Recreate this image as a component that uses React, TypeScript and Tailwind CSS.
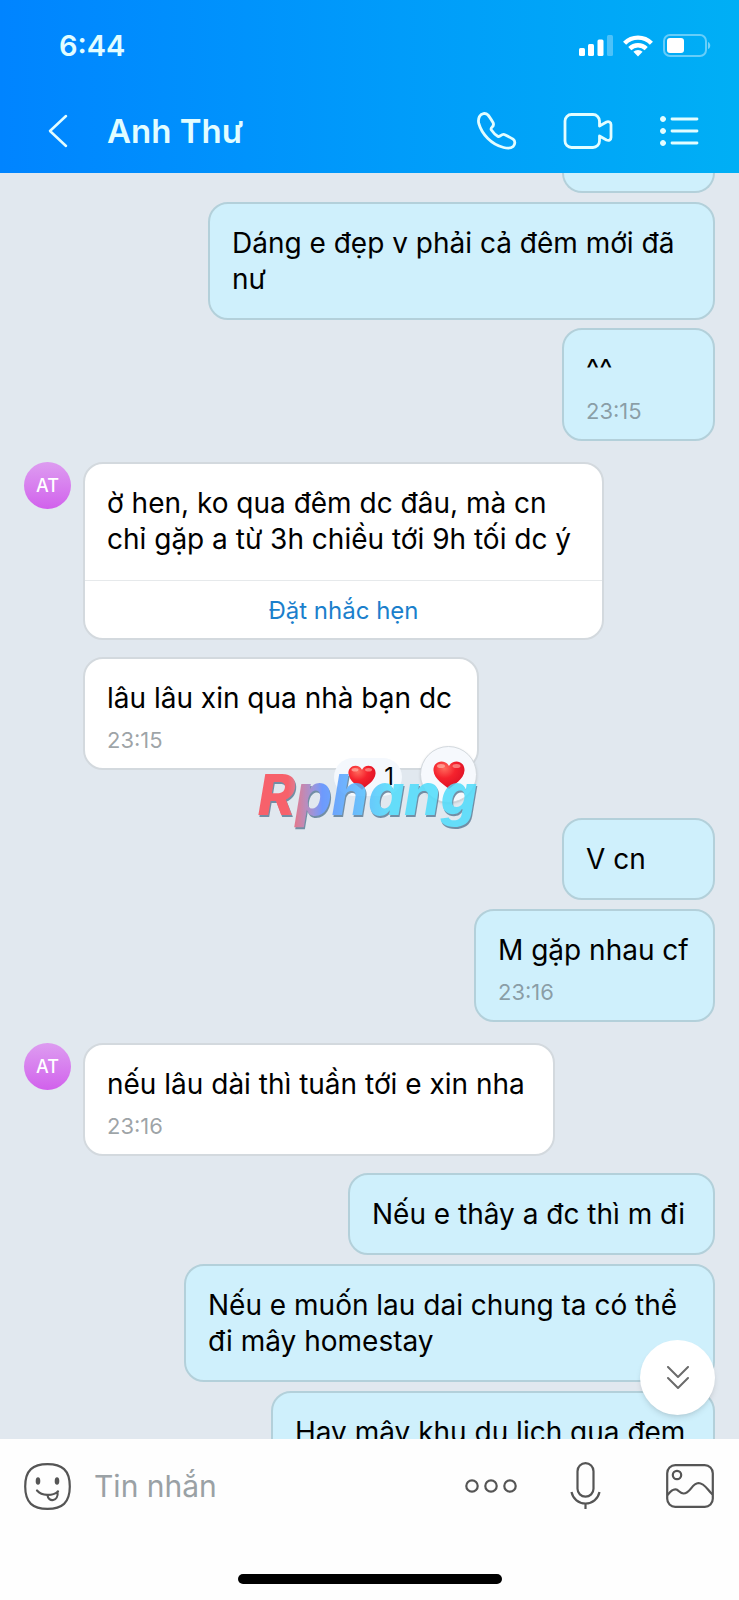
import { useState } from 'react';
import type { ReactNode } from 'react';

type Message = {
  id: number;
  mine?: boolean;
  text: string;
  time?: string;
  avatar?: boolean;
  reminder?: boolean;
  liked?: boolean;
  gap: string;
  width: string;
};

const messages: Message[] = [
  { id: 1, mine: true, text: 'Dáng e đẹp v phải cả đêm mới đã\nnư', gap: 'mt-[9px]', width: 'min-w-[507px]' },
  { id: 2, mine: true, text: '^^', time: '23:15', gap: 'mt-2', width: 'min-w-[153px]' },
  { id: 3, avatar: true, text: 'ờ hen, ko qua đêm dc đâu, mà cn\nchỉ gặp a từ 3h chiều tới 9h tối dc ý', reminder: true, gap: 'mt-[21px]', width: 'min-w-[521px]' },
  { id: 4, text: 'lâu lâu xin qua nhà bạn dc', time: '23:15', liked: true, gap: 'mt-[17px]', width: 'min-w-[396px]' },
  { id: 5, mine: true, text: 'V cn', gap: 'mt-12', width: 'min-w-[153px]' },
  { id: 6, mine: true, text: 'M gặp nhau cf', time: '23:16', gap: 'mt-[9px]', width: 'min-w-[241px]' },
  { id: 7, avatar: true, text: 'nếu lâu dài thì tuần tới e xin nha', time: '23:16', gap: 'mt-[21px]', width: 'min-w-[472px]' },
  { id: 8, mine: true, text: 'Nếu e thây a đc thì m đi', gap: 'mt-[17px]', width: 'min-w-[367px]' },
  { id: 9, mine: true, text: 'Nếu e muốn lau dai chung ta có thể\nđi mây homestay', gap: 'mt-[9px]', width: 'min-w-[531px]' },
  { id: 10, mine: true, text: 'Hay mây khu du lịch qua đem', gap: 'mt-[9px]', width: 'min-w-[444px]' },
];

export default function App() {
  return (
    <div className="flex h-screen flex-col overflow-hidden bg-[#e1e8ef] font-['Inter','Noto_Sans',sans-serif] text-black">
      <Header />
      <main className="relative min-h-0 flex-1">
        <div className="flex h-full flex-col overflow-hidden px-6">
          {/* tail of the previous message */}
          <div className="h-5 w-[153px] shrink-0 self-end rounded-b-[20px] border-2 border-t-0 border-[#b3d0da] bg-[#cff0fc]" />
          {messages.map(m => <MessageRow key={m.id} message={m} />)}
        </div>
        <button aria-label="Xuống cuối"
          className="absolute right-6 bottom-6 flex size-[75px] items-center justify-center rounded-full bg-white shadow-md">
          <svg width="24" height="24" viewBox="0 0 24 24" fill="none" stroke="#6b6b6b" strokeWidth="2" strokeLinecap="round" strokeLinejoin="round">
            <path d="M2 1l10 10L22 1M2 12l10 10 10-10" />
          </svg>
        </button>
      </main>
      <Composer />
    </div>
  );
}

function Header() {
  return (
    <header className="shrink-0 bg-linear-to-r from-[#0084ff] to-[#00aff5] text-[#e2fdff]">
      <div className="flex h-[92px] items-center justify-between pr-7 pl-[59px]">
        <span className="text-[29px] leading-9 font-semibold">6:44</span>
        <div className="flex items-center gap-[10px]">
          <svg width="34" height="22" viewBox="0 0 34 22" fill="#fff">
            <rect x="0" y="13" width="6" height="8" rx="1.5" />
            <rect x="9" y="9" width="6" height="12" rx="1.5" />
            <rect x="18.500" y="4.500" width="6" height="16.500" rx="1.500" />
            <rect x="28" y="0" width="6" height="21" rx="1.500" opacity=".3" />
          </svg>
          <svg width="30" height="22" viewBox="0 0 30 22" fill="none" stroke="#fff" strokeWidth="4.400">
            <path d="M1.600 8.200a19 19 0 0 1 26.800 0" />
            <path d="M6.800 13.600a11.600 11.600 0 0 1 16.400 0" />
            <path d="M15 21.500l-4.600-4.700a6.500 6.500 0 0 1 9.200 0z" fill="#fff" stroke="none" />
          </svg>
          <svg width="48" height="24" viewBox="0 0 48 24">
            <rect x="1" y="1" width="42" height="21" rx="6" fill="none" stroke="#fff" strokeOpacity=".4" strokeWidth="2" />
            <rect x="4" y="4" width="17" height="15" rx="3" fill="#fff" />
            <path d="M45 8c3 1 3 6 0 7z" fill="#fff" opacity=".45" />
          </svg>
        </div>
      </div>
      <div className="flex h-[81px] items-center pr-10 pb-1 pl-[46px]">
        <button aria-label="Quay lại">
          <svg width="22" height="34" viewBox="0 0 22 34" fill="none" stroke="currentColor" strokeWidth="2.500" strokeLinecap="round" strokeLinejoin="round">
            <path d="M20 2L4 17l16 15" />
          </svg>
        </button>
        <h1 className="ml-[39px] flex-1 text-[33px] leading-10 font-semibold">Anh Thư</h1>
        <div className="flex items-center gap-[46px]">
          <button aria-label="Gọi thoại">
            <svg width="41" height="40" viewBox="0 0 41 40" fill="none" stroke="currentColor" strokeWidth="2.800" strokeLinejoin="round">
              <path d="M3.500 5.500C5 2.300 9.500 1.500 12 4c1.700 2 3.500 5 5 7.500 1 2 .5 3.300-.8 4.500-1.300 1.200-1.600 1.800-.8 3 1.700 2.500 3.700 4.700 6.300 6.200 1.200.7 2 .4 3-.6 1.500-1.300 3-1.500 4.700-.7 2.300 1.200 5.500 2.800 7.700 4.300 2.500 2 2 5.300 0 7.300-2.200 2-6 2-9.500 1C15.500 33.500 6 23.500 2.800 12.500c-.6-2.500-.4-4.800.7-7z" />
            </svg>
          </button>
          <button aria-label="Gọi video">
            <svg width="50" height="36" viewBox="0 0 50 36" fill="none" stroke="currentColor" strokeWidth="2.800" strokeLinejoin="round">
              <path d="M36.500 13V8a6.500 6.500 0 0 0-6.500-6.500H8.500A6.500 6.500 0 0 0 2 8v20a6.500 6.500 0 0 0 6.500 6.500H30a6.500 6.500 0 0 0 6.500-6.500v-5l7 4c2.500 1 4.500-.2 4.500-2.500V11.500c0-2.300-2.500-3.500-4.500-2.500z" />
            </svg>
          </button>
          <button aria-label="Tùy chọn">
            <svg width="40" height="32" viewBox="0 0 40 32" fill="currentColor" stroke="currentColor" strokeLinecap="round">
              <circle cx="4" cy="4" r="2.500" />
              <circle cx="4" cy="16" r="2.500" />
              <circle cx="4" cy="28" r="2.500" />
              <path d="M13 4h25M13 16h25M13 28h25" strokeWidth="2.800" />
            </svg>
          </button>
        </div>
      </div>
    </header>
  );
}

function MessageRow({ message: m }: { message: Message }) {
  if (m.mine) {
    return (
      <div className={`flex shrink-0 justify-end ${m.gap}`}>
        <div className={`rounded-[20px] border-2 border-[#b3d0da] bg-[#cff0fc] ${m.width}`}>
          <BubbleText text={m.text} time={m.time} />
        </div>
      </div>
    );
  }

  return (
    <div className={`flex shrink-0 items-start gap-3 ${m.gap}`}>
      <div className="w-[47px] shrink-0">
        {m.avatar && (
          <div className="flex size-[47px] items-center justify-center rounded-full bg-linear-to-b from-[#dd9cf0] to-[#d160ec] text-[18px] font-medium text-white">
            AT
          </div>
        )}
      </div>
      <div className={`relative rounded-[20px] border-2 border-[#d3d9de] bg-white ${m.width}`}>
        <BubbleText text={m.text} time={m.time} />
        {m.reminder && (
          <button className="mt-[2px] block h-[58px] w-full border-t border-[#e6e9eb] pt-[2px] text-center text-[24px] text-[#1b7fcc]">
            Đặt nhắc hẹn
          </button>
        )}
        {m.liked && <Reactions />}
      </div>
    </div>
  );
}

function BubbleText({ text, time }: { text: string; time?: string }) {
  return (
    <div className={`px-[22px] pt-[21px] ${time ? 'pb-4' : 'pb-[21px]'}`}>
      <p className="text-[28px] leading-9 whitespace-pre">{text}</p>
      {time && <time className="mt-3 block text-[22px] leading-6 text-[#5c666c]/60">{time}</time>}
    </div>
  );
}

function Reactions() {
  const [liked, setLiked] = useState(true);

  return (
    <>
      <div className="absolute right-[75px] -bottom-7 flex h-[38px] w-[68px] items-center justify-end gap-2 rounded-full bg-[#f4f8fd] pr-2 text-[24px]">
        <Heart className="h-[25px] w-[28px]" />
        <span>1</span>
      </div>
      <button aria-label="Thả tim" aria-pressed={liked} onClick={() => setLiked(!liked)}
        className="absolute right-0 -bottom-[35px] flex size-[57px] items-center justify-center rounded-full border border-[#d3d9de] bg-[#f6f9fd] shadow-sm">
        <Heart className="h-[28px] w-[32px]" />
      </button>
      <div className="pointer-events-none absolute -right-1 -bottom-[61px] bg-linear-to-r from-[#fb4a55] from-15% via-[#5a8cff] via-30% to-[#4fdcfb] to-60% bg-clip-text px-1 text-[57px] leading-[68px] font-extrabold text-transparent italic opacity-85 drop-shadow-[1px_2px_0_#5f7f99]">
        Rphang
      </div>
    </>
  );
}

function Heart({ className }: { className: string }) {
  return (
    <svg className={className} viewBox="0 0 32 28">
      <defs>
        <radialGradient id="heart" cx=".35" cy=".25" r=".8">
          <stop offset="0" stopColor="#ff6a5c" />
          <stop offset=".45" stopColor="#f5222d" />
          <stop offset="1" stopColor="#d90f25" />
        </radialGradient>
      </defs>
      <path d="M16 28C12 24 1 18.500 .5 9.500.2 4 4 .5 8.500.5c3.500 0 6 1.800 7.500 4.500C17.500 2.300 20 .5 23.500.5c4.500 0 8.300 3.500 8 9C31 18.500 20 24 16 28z" fill="url(#heart)" />
      <ellipse cx="8" cy="5" rx="4" ry="2" fill="#ffb3a6" opacity=".7" />
      <ellipse cx="23.500" cy="5" rx="4" ry="2" fill="#ffb3a6" opacity=".6" />
    </svg>
  );
}

function Composer() {
  return (
    <footer className="flex shrink-0 flex-col bg-[#fefefe] text-[#555]">
      <div className="flex h-[94px] items-center pr-[25px] pl-6">
        <IconButton label="Nhãn dán">
          <svg width="47" height="47" viewBox="0 0 47 47" fill="none" stroke="currentColor" strokeWidth="2.200" strokeLinecap="round">
            <path d="M23.500 1.200C38 1.200 45.800 7 45.800 23.500S38 45.800 23.500 45.800 1.200 40 1.200 23.500 9 1.200 23.500 1.200z" />
            <ellipse cx="14" cy="18" rx="2.300" ry="3.800" fill="currentColor" stroke="none" />
            <ellipse cx="33" cy="18" rx="2.300" ry="3.800" fill="currentColor" stroke="none" />
            <path d="M13 27.500c5 5.500 15 6 21 1M23.500 32c.5 7.500 11.500 7 10-3.500" />
          </svg>
        </IconButton>
        <input type="text" aria-label="Tin nhắn" placeholder="Tin nhắn"
          className="ml-[23px] min-w-0 flex-1 bg-transparent text-[30px] text-black outline-none placeholder:text-[#9aa1a5]" />
        <IconButton label="Thêm">
          <svg width="52" height="16" viewBox="0 0 52 16" fill="none" stroke="currentColor" strokeWidth="2.200">
            <circle cx="7" cy="8" r="5.700" />
            <circle cx="26" cy="8" r="5.700" />
            <circle cx="45" cy="8" r="5.700" />
          </svg>
        </IconButton>
        <span className="ml-[53px] flex">
          <IconButton label="Ghi âm">
            <svg width="31" height="48" viewBox="0 0 31 48" fill="none" stroke="currentColor" strokeWidth="2.200">
              <rect x="7.500" y="1.200" width="16" height="33.500" rx="8" />
              <path d="M1.500 30c1.500 7 7 11.500 14 11.500S28 37 29.500 30M15.500 41.500V47" />
            </svg>
          </IconButton>
        </span>
        <span className="ml-[65px] flex">
          <IconButton label="Gửi ảnh">
            <svg width="48" height="44" viewBox="0 0 48 44" fill="none" stroke="currentColor" strokeWidth="2.200">
              <rect x="1.200" y="1.200" width="45.600" height="41.600" rx="8" />
              <circle cx="11" cy="11" r="4.200" />
              <path d="M1.500 31c3-4 6-6.500 9-5.500 2 .8 3.500 4 7 4 7 0 8-10 15-10.500 6 0 9 7 14 11.500" />
            </svg>
          </IconButton>
        </span>
      </div>
      <div className="flex h-[67px] items-end justify-center pb-4">
        <div className="h-[10px] w-[264px] rounded-full bg-black" />
      </div>
    </footer>
  );
}

function IconButton({ label, children }: { label: string; children: ReactNode }) {
  return <button aria-label={label} className="flex shrink-0 items-center">{children}</button>;
}
